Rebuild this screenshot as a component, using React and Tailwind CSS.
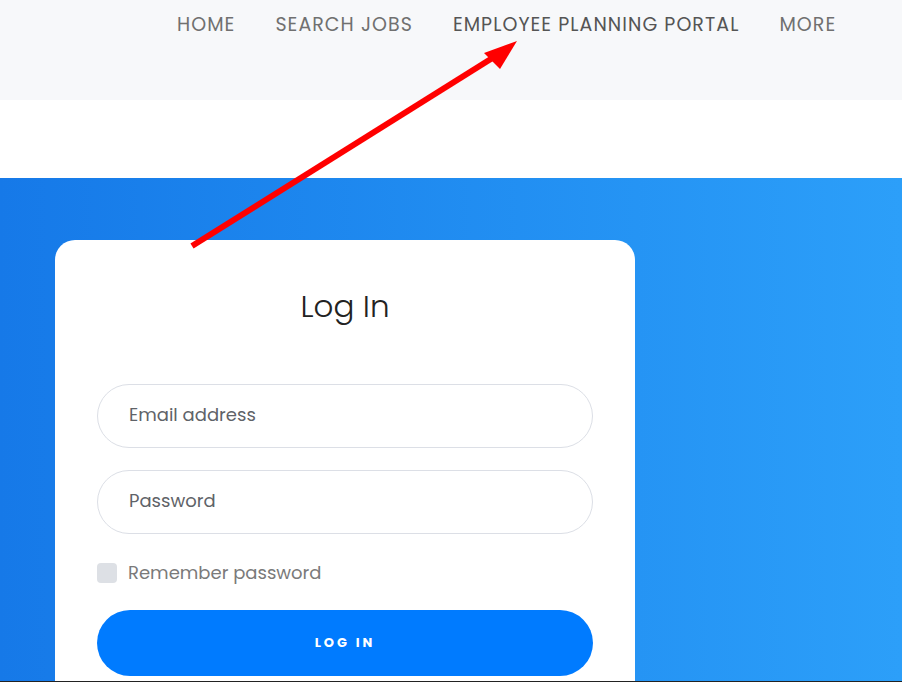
const NAV = [
  { label: "HOME", active: false },
  { label: "SEARCH JOBS", active: false },
  { label: "EMPLOYEE PLANNING PORTAL", active: true },
  { label: "MORE", active: false },
];

const font = { fontFamily: "Poppins, 'Open Sans', 'Liberation Sans', sans-serif" };

function Header() {
  return (
    <header className="h-[100px] bg-[#f7f8fa]">
      <nav className="flex gap-[40px] pl-[177px] pt-[12px]">
        {NAV.map((item) => (
          <a
            key={item.label}
            href="#"
            className={`text-[19px] leading-[26px] tracking-[1.05px] ${item.active ? "text-[#555]" : "text-[#707070]"}`}
          >
            {item.label}
          </a>
        ))}
      </nav>
    </header>
  );
}

function LoginCard() {
  return (
    <div className="w-[580px] flex-1 rounded-t-[20px] bg-white px-[42px] pt-[46px]">
      <h1 className="text-center text-[31px] font-light leading-[40px] text-[#222]">Log In</h1>
      <form className="mt-[58px] flex flex-col" onSubmit={(e) => e.preventDefault()}>
        <input
          type="email"
          placeholder="Email address"
          className="h-[64px] rounded-full border border-[#dcdfe6] px-[31px] pb-[3px] text-[18px] text-[#333] placeholder:text-[#5f6368] outline-none"
        />
        <input
          type="password"
          placeholder="Password"
          className="mt-[22px] h-[64px] rounded-full border border-[#dcdfe6] px-[31px] pb-[3px] text-[18px] text-[#333] placeholder:text-[#5f6368] outline-none"
        />
        <label className="mt-[29px] flex items-center gap-[11px] text-[18px] leading-[20px] text-[#7a7a7a]">
          <span className="h-[20px] w-[20px] rounded-[4px] bg-[#dde0e5]" />
          Remember password
        </label>
        <button
          type="submit"
          className="mt-[27px] h-[66px] rounded-full bg-[#007bff] text-[13px] font-bold tracking-[3px] text-white"
        >
          LOG IN
        </button>
      </form>
    </div>
  );
}

function Arrow() {
  return (
    <svg className="pointer-events-none absolute left-0 top-0" width="902" height="682">
      <line x1="192" y1="246" x2="494" y2="57" stroke="#ff0000" strokeWidth="6" />
      <polygon points="517,41 484,53 500,69" fill="#ff0000" />
    </svg>
  );
}

export default function App() {
  return (
    <div className="relative flex h-[682px] w-[902px] flex-col overflow-hidden bg-white" style={font}>
      <Header />
      <div className="h-[78px]" />
      <section className="flex flex-1 flex-col bg-gradient-to-r from-[#1679e8] to-[#2c9ff9] pl-[55px] pt-[62px]">
        <LoginCard />
      </section>
      <div className="h-px bg-[#222]" />
      <Arrow />
    </div>
  );
}
